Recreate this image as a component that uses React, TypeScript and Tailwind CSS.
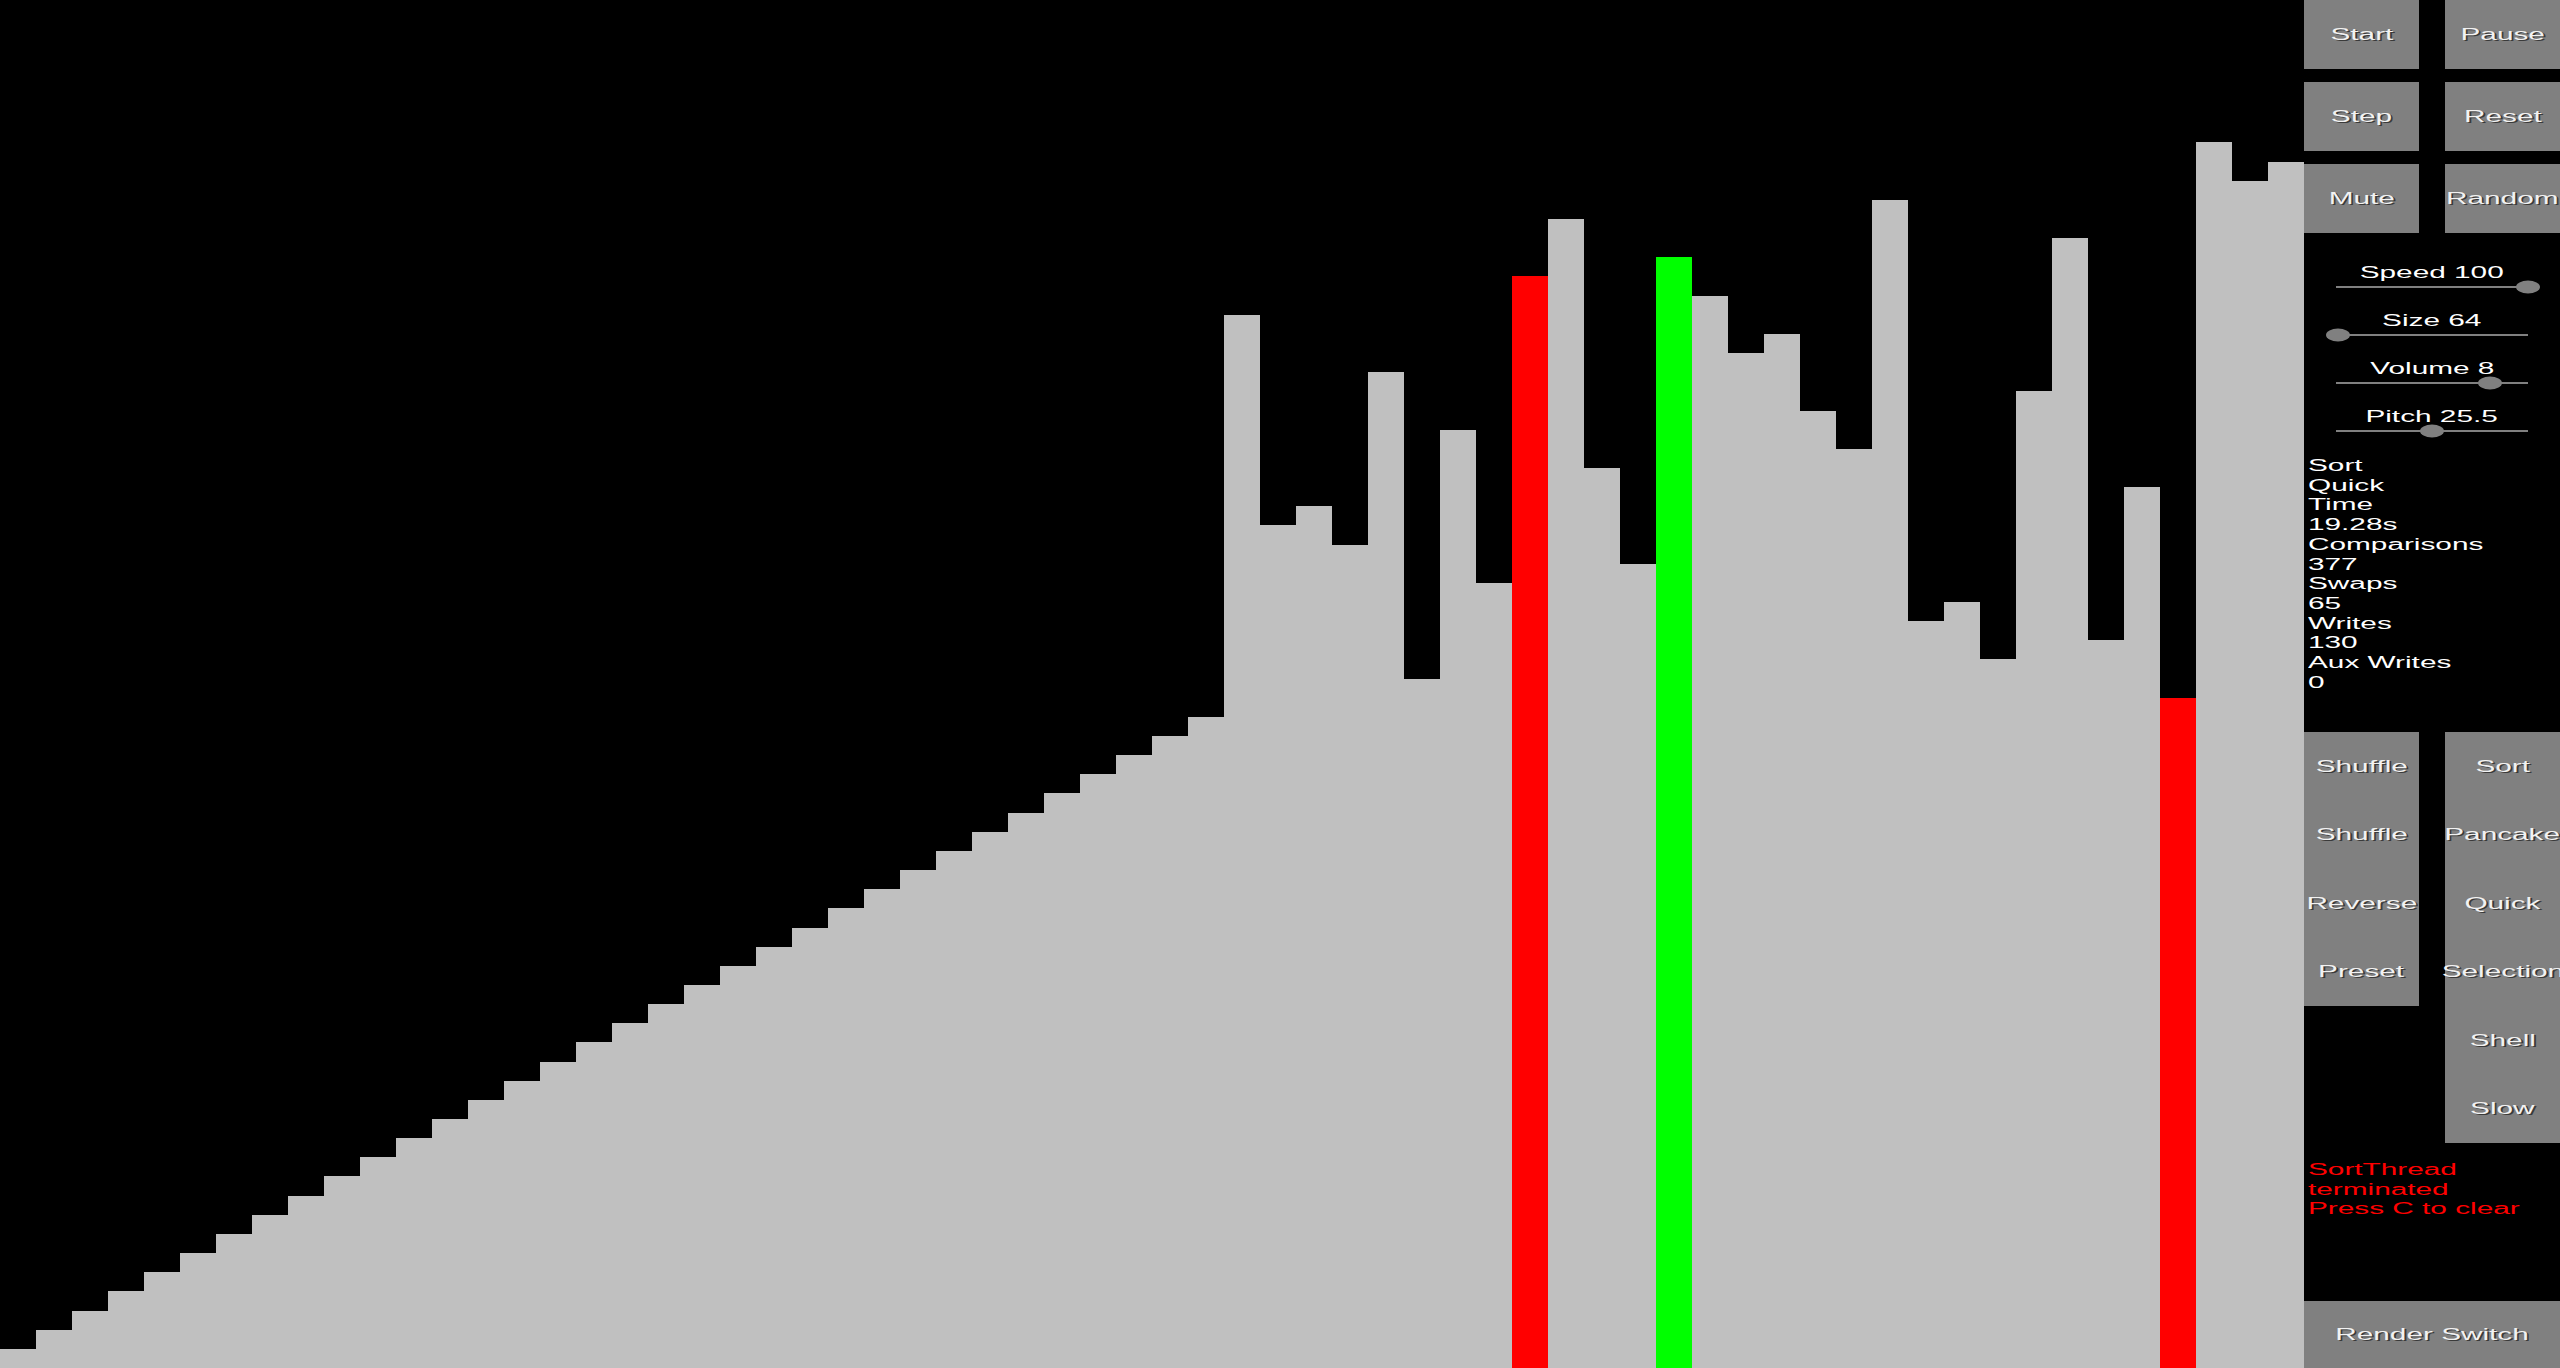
import React from "react";

const VALUES: number[] = [
  ...Array.from({ length: 34 }, (_, i) => i + 1),
  55, 44, 45, 43, 52, 36, 49, 41, 57, 60, 47, 42, 58, 56, 53, 54, 50, 48, 61, 39, 40, 37, 51, 59, 38, 46, 35, 64, 62, 63,
];

const RED = new Set([42, 60]);
const GREEN = new Set([46]);

function T({ children, className = "" }: { children: React.ReactNode; className?: string }) {
  return (
    <span className={`inline-block whitespace-nowrap [transform:scaleX(1.86)] ${className}`}>{children}</span>
  );
}

function Btn({ label, className = "" }: { label: string; className?: string }) {
  return (
    <div className={`flex items-center justify-center ${className}`}>
      <T className="origin-center text-[#f2f2f2] [text-shadow:1px_1px_0_#3a3a3a]">{label}</T>
    </div>
  );
}

function Slider({ label, pct }: { label: string; pct: number }) {
  return (
    <div className="flex h-[48px] flex-col items-center">
      <div className="h-[20px] leading-[20px] text-white">
        <T className="origin-center">{label}</T>
      </div>
      <div className="relative mt-[3px] h-[2px] w-[192px] bg-[#808080]">
        <div
          className="absolute top-1/2 h-[13px] w-[24px] -translate-x-1/2 -translate-y-1/2 rounded-[50%] bg-[#808080]"
          style={{ left: `${pct}%` }}
        />
      </div>
    </div>
  );
}

const STATS = ["Sort", "Quick", "Time", "19.28s", "Comparisons", "377", "Swaps", "65", "Writes", "130", "Aux Writes", "0"];

export default function App() {
  return (
    <div className="flex h-[1368px] w-[2560px] overflow-hidden bg-black font-['Liberation_Sans',Arial,sans-serif] text-[16px]">
      <div className="flex h-[1368px] w-[2304px] shrink-0 items-end">
        {VALUES.map((v, i) => (
          <div
            key={i}
            className={`w-[36px] shrink-0 ${RED.has(i) ? "bg-[#ff0000]" : GREEN.has(i) ? "bg-[#00ff00]" : "bg-[#c0c0c0]"}`}
            style={{ height: `${Math.round(v * 19.15)}px` }}
          />
        ))}
      </div>
      <div className="flex h-[1368px] w-[256px] shrink-0 flex-col">
        <div className="grid grid-cols-[115px_115px] justify-between gap-y-[13px]">
          {["Start", "Pause", "Step", "Reset", "Mute", "Random"].map((l) => (
            <Btn key={l} label={l} className="h-[69px] bg-[#808080]" />
          ))}
        </div>
        <div className="mt-[30px] flex flex-col">
          <Slider label="Speed 100" pct={100} />
          <Slider label="Size 64" pct={1} />
          <Slider label="Volume 8" pct={80} />
          <Slider label="Pitch 25.5" pct={50} />
        </div>
        <div className="mt-[1px] flex flex-col pl-[4px] leading-[19.7px] text-white">
          {STATS.map((s, i) => (
            <div key={i}>
              <T className="origin-left">{s}</T>
            </div>
          ))}
        </div>
        <div className="mt-[40px] grid grid-cols-[115px_115px] items-start justify-between">
          <div className="flex flex-col bg-[#808080]">
            {["Shuffle", "Shuffle", "Reverse", "Preset"].map((l, i) => (
              <Btn key={i} label={l} className="h-[68.5px]" />
            ))}
          </div>
          <div className="flex flex-col bg-[#808080]">
            {["Sort", "Pancake", "Quick", "Selection", "Shell", "Slow"].map((l, i) => (
              <Btn key={i} label={l} className="h-[68.5px]" />
            ))}
          </div>
        </div>
        <div className="mt-[17px] flex flex-col pl-[4px] leading-[19.5px] text-[#ff0000]">
          <div><T className="origin-left">SortThread</T></div>
          <div><T className="origin-left">terminated</T></div>
          <div><T className="origin-left">Press C to clear</T></div>
        </div>
        <Btn label="Render Switch" className="mt-auto h-[67px] w-full bg-[#808080]" />
      </div>
    </div>
  );
}
